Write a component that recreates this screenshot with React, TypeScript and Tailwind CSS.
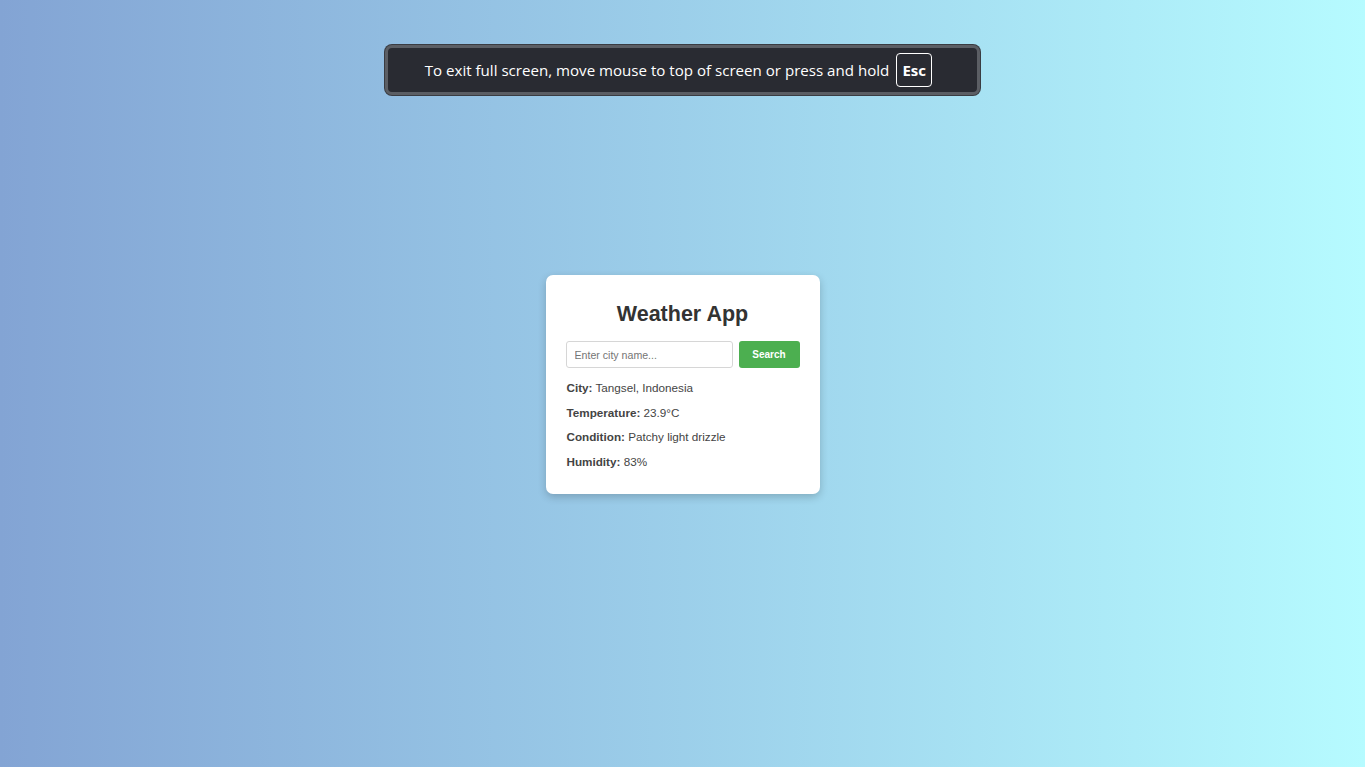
import React from "react";

export default function App() {
  return (
    <div
      className="relative flex h-[767px] w-full items-center justify-center bg-gradient-to-r from-[#83a4d4] to-[#b6fbff]"
      style={{ fontFamily: '"Liberation Sans", Arial, sans-serif' }}
    >
      <div className="absolute left-[385px] top-[45px] flex h-[50px] w-[595px] items-center justify-center gap-[7px] rounded-[7px] border-[3px] border-[#5b5e64] bg-[#292b32] pr-[8px] shadow-[0_0_0_1px_#3a3c42]">
        <span
          className="text-[15.1px] text-white"
          style={{ fontFamily: '"Open Sans", "Noto Sans", sans-serif' }}
        >
          To exit full screen, move mouse to top of screen or press and hold
        </span>
        <span
          className="flex h-[34px] w-[36px] items-center justify-center rounded-[4px] border border-white text-[15px] font-bold text-white"
          style={{ fontFamily: '"Open Sans", "Noto Sans", sans-serif' }}
        >
          Esc
        </span>
      </div>

      <div className="mt-[2px] flex w-[274px] flex-col rounded-[7px] bg-white px-[20px] pb-[25px] pt-[26px] text-[#333] shadow-[0_3px_8px_rgba(0,0,0,0.2)]">
        <h1 className="text-center text-[21.5px] font-bold leading-[26px] text-[#333]">
          Weather App
        </h1>
        <div className="mt-[14px] flex gap-[6px]">
          <input
            placeholder="Enter city name..."
            className="h-[27px] w-[167px] rounded-[3px] border border-[#d6d6d6] px-[8px] text-[10.6px] text-[#333] placeholder:text-[#757575] outline-none"
          />
          <button className="h-[27px] w-[61px] rounded-[3px] bg-[#4caf50] text-[10px] font-bold text-white">
            Search
          </button>
        </div>
        <div className="mt-[13px] flex flex-col gap-[10.5px] pl-[1px] text-[11.7px] leading-[14px] text-[#444]">
          <p>
            <span className="font-bold">City:</span> Tangsel, Indonesia
          </p>
          <p>
            <span className="font-bold">Temperature:</span> 23.9°C
          </p>
          <p>
            <span className="font-bold">Condition:</span> Patchy light drizzle
          </p>
          <p>
            <span className="font-bold">Humidity:</span> 83%
          </p>
        </div>
      </div>
    </div>
  );
}
